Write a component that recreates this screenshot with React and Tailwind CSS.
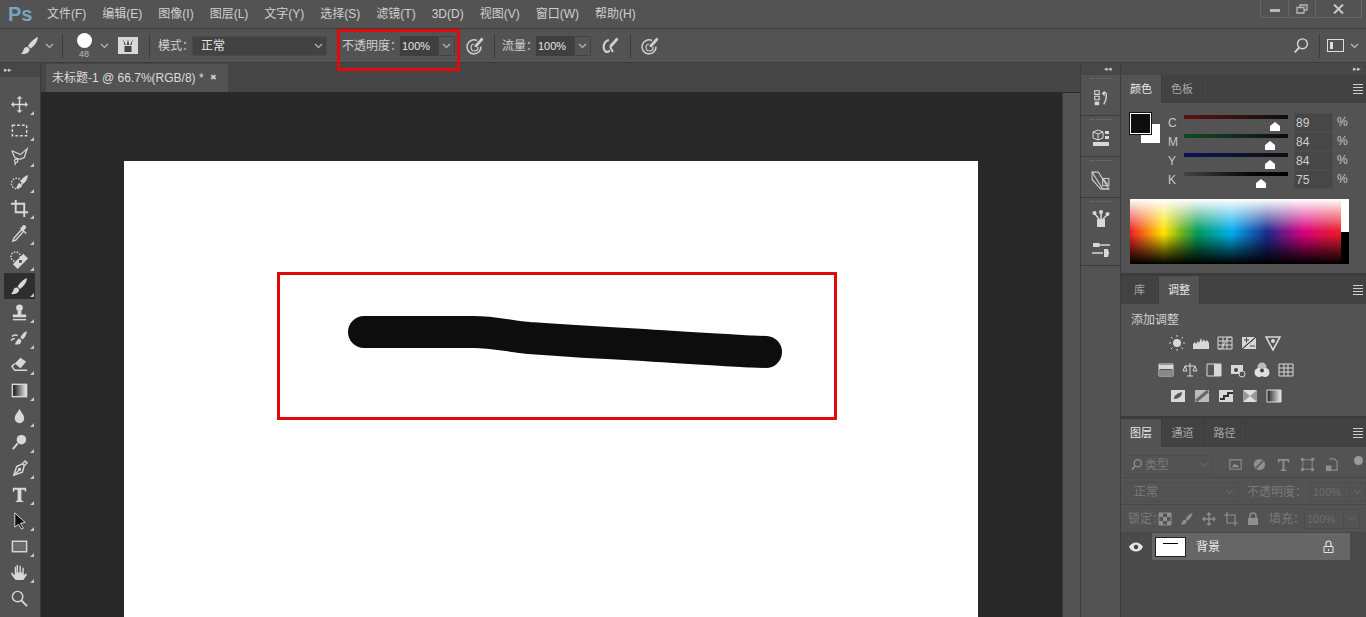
import React from 'react';

const FONT = "font-['Liberation_Sans','Noto_Sans_CJK_SC',sans-serif]";

const Ico = ({ size = 20, box = 20, className = 'text-[#d8d8d8]', children }) => (
  <svg width={size} height={size} viewBox={`0 0 ${box} ${box}`} fill="none" stroke="currentColor" strokeWidth="1.5" className={`shrink-0 ${className}`}>
    {children}
  </svg>
);

const Chevron = ({ className = 'text-[#bdbdbd]' }) => (
  <svg width="9" height="6" viewBox="0 0 9 6" fill="none" stroke="currentColor" strokeWidth="1.1" className={`shrink-0 ${className}`}>
    <path d="M1 1l3.5 3.5L8 1" />
  </svg>
);

const Brush = () => (
  <>
    <path d="M18 1c-3 1-8 5-10 9l2.500 2.500c4-2.500 7-7 7.500-11.500z" fill="currentColor" stroke="none" />
    <path d="M7 11c-2 0-3 1-3.500 3-.3 1.500-1.500 3-2.500 4 3 .5 8-.5 8.500-4 .2-1.500-1-3-2.500-3z" fill="currentColor" stroke="none" />
  </>
);

const toolIcons = [
  <><path d="M10 2v16M2 10h16" /><path d="M10 1l-3 3h6zM10 19l-3-3h6zM1 10l3-3v6zM19 10l-3-3v6z" fill="currentColor" stroke="none" /></>,
  <rect x="2.500" y="4.500" width="15" height="11" strokeDasharray="3 2" />,
  <><path d="M2 4l9 4 7-6-3 9-5 2" strokeWidth="1.300" /><path d="M10 13l-5-2-3-7" strokeWidth="1.300" /><circle cx="6.500" cy="14.500" r="1.800" strokeWidth="1.200" /><path d="M6 16l-1 3" strokeWidth="1.300" /></>,
  <><circle cx="7" cy="11" r="5.500" strokeDasharray="1.500 1.500" /><path d="M19 2c-3 1-7 4-8 7l2.500 2.500c3-2 5-5 5.500-9.500z" fill="currentColor" stroke="none" /><path d="M10 10.500c-2 .5-2 4-4 5.500 3 .5 6-.5 6.500-3z" fill="currentColor" stroke="none" /></>,
  <path d="M6 1v13h13M1 5h14v14" strokeWidth="2" />,
  <><path d="M12 5l-8 9-1 3 3-1 8-9" /><path d="M11 3l6 6M13 6l3-3a1.500 1.500 0 0 0-2-2l-2 3z" fill="currentColor" /></>,
  <><circle cx="6" cy="6" r="5" strokeDasharray="1.500 1.500" /><path d="M14 3l5 5L8 19l-5-5z" fill="currentColor" stroke="none" /><path d="M9.500 9.500h3v3h-3z" fill="#535353" stroke="none" /></>,
  <Brush />,
  <><circle cx="10" cy="5" r="3.500" fill="currentColor" stroke="none" /><path d="M8 8h4v4H8zM3 12h14v3H3z" fill="currentColor" stroke="none" /><path d="M3 17.500h14" /></>,
  <><path d="M18 2c-3 1-6 4-7 7l2 2c3-2 4-5 5-9z" fill="currentColor" stroke="none" /><path d="M10 10c-2 0-3 3-5 6 3 1 7 0 7-4z" fill="currentColor" stroke="none" /><path d="M2 8c2-2 4-2 6-1M1 12c1-1 2-2 4-2" /></>,
  <><path d="M11 3l6 4-6 7-6-5z" fill="currentColor" stroke="none" /><path d="M5 9l-3 3 3 4h13" /></>,
  <><defs><linearGradient id="tg"><stop offset="0" stopColor="#111" /><stop offset="1" stopColor="#eee" /></linearGradient></defs><rect x="2.500" y="3.500" width="15" height="13" fill="url(#tg)" /></>,
  <path d="M10 2c2 4 5 6 5 10a5 5 0 0 1-10 0c0-4 3-6 5-10z" fill="currentColor" stroke="none" />,
  <><circle cx="12" cy="7" r="5" fill="currentColor" stroke="none" /><path d="M8 11l-5 6" strokeWidth="2" /></>,
  <><path d="M16 2l2 2-3 3-2-2zM13 5l2 2-2 7-9 3 3-9z" /><path d="M4 17l5-5" /><circle cx="10" cy="11" r="1" fill="currentColor" /></>,
  <path d="M3 3h14v4h-1l-1-2h-3v11l2 1v1H6v-1l2-1V5H5L4 7H3z" fill="currentColor" stroke="none" />,
  <path d="M5 2l11 10-5 1 3 5-2 1-3-5-4 3z" fill="#111" stroke="#ddd" strokeWidth="1" />,
  <rect x="2.500" y="4.500" width="15" height="11" fill="#6b6b6b" />,
  <path d="M6 18c-2-2-4-5-5-7l1-1 3 3V4h1.500v6H7V2h1.500v8H10V3h1.500v7H13V5h1.500v8l2-2 1.500 1-4 6z" fill="currentColor" stroke="none" />,
  <><circle cx="8" cy="8" r="5.500" /><path d="M12 12l6 6" strokeWidth="2" /></>,
];

const menus = ['文件(F)', '编辑(E)', '图像(I)', '图层(L)', '文字(Y)', '选择(S)', '滤镜(T)', '3D(D)', '视图(V)', '窗口(W)', '帮助(H)'];

const Divider = ({ className = '' }) => <div className={`w-px h-[24px] bg-[#3c3c3c] shrink-0 ${className}`} />;

const Airbrush = ({ ring }) => (
  <Ico size={20} className="text-[#cfcfcf]">
    {ring ? <path d="M12 4.500a7 7 0 1 0 4 6" /> : <path d="M9 4a7 7 0 0 0-3 12c2 0 3-1 4-1" strokeWidth="2.200" />}
    {ring && <path d="M9 8a3.500 3.500 0 1 0 4 3" strokeWidth="1.200" />}
    <path d="M16.500 1.500l2 2-7 8-2.500-1.500z" fill="currentColor" stroke="none" />
    {!ring && <path d="M10 11l3 5" strokeWidth="2" />}
  </Ico>
);

const ValueBox = ({ value }) => (
  <div className="flex h-[20px] items-stretch shrink-0">
    <div className="w-[38px] bg-[#3f3f3f] text-[#e6e6e6] text-[11px] leading-[20px] pl-[2px]">{value}</div>
    <div className="w-[17px] border border-[#444] flex items-center justify-center"><Chevron /></div>
  </div>
);

const Label = ({ className, children }) => <span className={`whitespace-nowrap shrink-0 ${className}`}>{children}</span>;

const OptionsBar = () => (
  <div className="h-[35px] border-t border-b border-[#3c3c3c] bg-[#535353] flex items-center text-[12px] text-[#d0d0d0] relative shrink-0">
    <div className="flex items-center ml-[20px] w-[42px] gap-[5px] shrink-0">
      <Ico size={20}><Brush /></Ico>
      <Chevron />
    </div>
    <Divider />
    <div className="flex flex-col items-center ml-[11px] w-[20px] shrink-0">
      <div className="w-[15px] h-[15px] rounded-full bg-white" />
      <span className="text-[9px] leading-[9px] mt-[2px] text-[#bbb]">48</span>
    </div>
    <Chevron className="text-[#bdbdbd] ml-[6px]" />
    <div className="ml-[9px] w-[20px] h-[17px] shrink-0 bg-[#d8d8d8] flex items-center justify-center">
      <svg width="14" height="13" viewBox="0 0 14 13" fill="#444"><path d="M2 0l3 6H3.500zM7 0l1.200 6H5.800zM12 0l-1.500 6H9zM3.500 7h7v6h-7z" /></svg>
    </div>
    <Divider className="ml-[11px]" />
    <Label className="ml-[8px] w-[34px]">模式：</Label>
    <div className="w-[135px] h-[20px] shrink-0 bg-[#424242] border border-[#4a4a4a] flex items-center justify-between pl-[8px] pr-[3px] text-[#e6e6e6]">
      <span>正常</span>
      <Chevron />
    </div>
    <Label className="ml-[15px] w-[58px]">不透明度：</Label>
    <ValueBox value="100%" />
    <div className="ml-[10px]"><Airbrush ring /></div>
    <Divider className="ml-[9px]" />
    <Label className="ml-[7px] w-[34px]">流量：</Label>
    <ValueBox value="100%" />
    <div className="ml-[9px]"><Airbrush /></div>
    <Divider className="ml-[10px]" />
    <div className="ml-[9px]"><Airbrush ring /></div>
    <div className="flex-1" />
    <Ico size={18}><circle cx="10.500" cy="7.500" r="5.500" /><path d="M6.500 12L2 17" strokeWidth="2" /></Ico>
    <Divider className="ml-[8px]" />
    <div className="ml-[7px] w-[17px] h-[13px] border border-[#ddd] flex items-center pl-[2px]">
      <div className="w-[3px] h-[7px] bg-[#ddd]" />
    </div>
    <Chevron className="text-[#bdbdbd] ml-[6px] mr-[7px]" />
  </div>
);

const Toolbar = () => (
  <div className="w-[41px] shrink-0 border-r border-[#3a3a3a] bg-[#535353] flex flex-col">
    <div className="h-[14px] bg-[#474747] text-[#ccc] text-[7px] leading-[13px] pl-[4px]">▸▸</div>
    <div className="h-[14px]" />
    {toolIcons.map((icon, i) => (
      <div key={i} className={`h-[26px] w-[31px] ml-[4px] relative flex items-center justify-center ${i === 7 ? 'bg-[#2e2e2e] rounded-[1px]' : ''}`}>
        <Ico size={19}>{icon}</Ico>
        {i !== 19 && <div className="absolute right-[1px] bottom-[2px] w-0 h-0 border-l-[4px] border-l-transparent border-b-[4px] border-b-[#c8c8c8]" />}
      </div>
    ))}
  </div>
);

const Document = () => (
  <div className="flex-1 min-w-0 flex flex-col">
    <div className="h-[29px] bg-[#454545] shrink-0 flex items-end pl-[5px]">
      <div className="w-[182px] h-[28px] bg-[#535353] flex items-center pl-[6px] text-[12px] text-[#dcdcdc]">
        <span>未标题-1 @ 66.7%(RGB/8) *</span>
        <span className="ml-[6px] text-[8px] leading-none text-[#cfcfcf]">✖</span>
      </div>
    </div>
    <div className="flex-1 min-h-0 flex border-t border-[#2a2a2a]">
      <div className="flex-1 bg-[#282828] overflow-hidden pl-[83px] pt-[68px]">
        <div className="w-[854px] h-[456px] bg-white">
          <svg width="854" height="456" viewBox="0 0 854 456" fill="none">
            <path d="M240 171H350C368 171 385 175 405 177C445 180 480 182 520 184C560 187 600 189 628 190.500L642 191" stroke="#0d0d0d" strokeWidth="32" strokeLinecap="round" strokeLinejoin="round" />
          </svg>
        </div>
      </div>
      <div className="w-[18px] bg-[#535353] border-l border-[#3c3c3c]" />
    </div>
  </div>
);

const Grip = () => <div className="h-[3px] mx-[9px] mt-[3px] border-t border-dotted border-[#777]" />;

const DockGroup = ({ h, children }) => (
  <div className={`${h} border-b border-[#3c3c3c] flex flex-col`}>
    <Grip />
    <div className="flex-1 flex flex-col items-center justify-around">{children}</div>
  </div>
);

const Dock = () => (
  <div className="w-[41px] shrink-0 bg-[#535353] border-x border-[#3c3c3c] flex flex-col">
    <div className="h-[12px] bg-[#474747] text-[#ccc] text-[7px] leading-[11px] text-right pr-[8px]">◂◂</div>
    <DockGroup h="h-[41px]">
      <Ico size={18}><path d="M3 2h5v4H3zM3 8h5v4H3z" strokeWidth="1.200" /><path d="M3 14h5v4H3z" fill="currentColor" stroke="none" /><path d="M12 4h3c2 2 1 8-2 13" /><path d="M11 5l3-3v6z" fill="currentColor" stroke="none" /></Ico>
    </DockGroup>
    <DockGroup h="h-[41px]">
      <Ico size={20}><path d="M7 1l5 2v6l-5 2-5-2V3zM2 3l5 2 5-2M7 5v6" strokeWidth="1" /><path d="M14 2h4v3h-4zM14 7h4v3h-4zM2 13h16v4H2z" fill="currentColor" stroke="none" /></Ico>
    </DockGroup>
    <DockGroup h="h-[41px]">
      <Ico size={21} className="text-[#d0d0d0]"><path d="M2 2h6l10 16h-6z" strokeWidth="1" /><path d="M2 2v7l8 9h8" strokeWidth="1" /><path d="M12 8h6v7h-6z" strokeWidth="1" /><path d="M13 9l4 5" strokeWidth="1" /></Ico>
    </DockGroup>
    <DockGroup h="h-[68px]">
      <Ico size={20}><path d="M6 10h8v8H6z" fill="currentColor" stroke="none" /><path d="M8 10L4 5M10 10V4M12 10l4-4" strokeWidth="1.500" /><circle cx="3.500" cy="4" r="2" fill="currentColor" stroke="none" /><circle cx="10" cy="3" r="2" fill="currentColor" stroke="none" /><circle cx="16.500" cy="5" r="2" fill="currentColor" stroke="none" /></Ico>
      <Ico size={20}><path d="M10 5h9M1 13h11" /><path d="M2 3h6l2 2-2 2H2zM13 9h4l1 4-1 4h-4z" fill="currentColor" stroke="none" /></Ico>
    </DockGroup>
  </div>
);

const PanelTabs = ({ tabs, active, widths }) => (
  <div className="h-[28px] bg-[#424242] flex items-stretch relative shrink-0">
    {tabs.map((t, i) => (
      <div key={t} className={`${widths[i]} flex items-center justify-center text-[11px] border-r border-[#3c3c3c] ${i === active ? 'bg-[#535353] text-[#e8e8e8]' : 'text-[#a8a8a8]'}`}>{t}</div>
    ))}
    <div className="absolute right-[3px] top-[9px] w-[10px] flex flex-col gap-[2px]">
      <div className="h-px bg-[#cfcfcf]" /><div className="h-px bg-[#cfcfcf]" /><div className="h-px bg-[#cfcfcf]" /><div className="h-px bg-[#cfcfcf]" />
    </div>
  </div>
);

const sliders = [
  { k: 'C', v: '89', thumb: 'ml-[85px]', grad: 'bg-gradient-to-r from-[#5c0f0f] to-[#0d0d0d]' },
  { k: 'M', v: '84', thumb: 'ml-[80px]', grad: 'bg-gradient-to-r from-[#0b4a2c] to-[#0d0d0d]' },
  { k: 'Y', v: '84', thumb: 'ml-[80px]', grad: 'bg-gradient-to-r from-[#10105c] to-[#0d0d0d]' },
  { k: 'K', v: '75', thumb: 'ml-[71px]', grad: 'bg-gradient-to-r from-[#3e4644] to-[#000000]' },
];

const ColorPanel = () => (
  <div className="h-[199px] shrink-0 flex flex-col">
    <PanelTabs tabs={['颜色', '色板']} active={0} widths={['w-[41px]', 'w-[41px]']} />
    <div className="flex-1 bg-[#535353] border-b border-[#3c3c3c] pl-[9px] pt-[10px]">
      <div className="flex h-[76px]">
        <div className="w-[30px] h-[30px] relative shrink-0">
          <div className="absolute left-[11px] top-[11px] w-[19px] h-[19px] bg-white" />
          <div className="absolute left-0 top-0 w-[21px] h-[21px] bg-[#0d0d0d] border border-white outline outline-[#111]" />
        </div>
        <div className="ml-[8px] flex flex-col">
          {sliders.map((s) => (
            <div key={s.k} className="h-[19px] flex items-start text-[12px] text-[#c8c8c8]">
              <span className="w-[16px] leading-[19px] pt-[1px]">{s.k}</span>
              <div className="w-[104px] relative pt-[2px]">
                <div className={`h-[4px] ${s.grad}`} />
                <svg width="12" height="9" viewBox="0 0 12 9" className={`${s.thumb} mt-[3px]`}>
                  <path d="M6 0l5 4v5H1V4z" fill="#fff" />
                </svg>
              </div>
              <div className="ml-[6px] w-[39px] h-[19px] bg-[#474747] border border-[#4c4c4c] text-[#d0d0d0] leading-[18px] pl-[1px]">{s.v}</div>
              <span className="ml-[3px] pl-[1px] leading-[19px] text-[#c8c8c8]">%</span>
            </div>
          ))}
        </div>
      </div>
      <div className="mt-[10px] w-[219px] h-[65px] flex">
        <div className="flex-1 bg-[linear-gradient(to_bottom,#ffffff_0%,rgba(255,255,255,0.55)_22%,rgba(255,255,255,0)_50%,rgba(0,0,0,0)_54%,rgba(0,0,0,0.55)_78%,#000000_100%),linear-gradient(to_right,#ed1c24_0%,#ffe600_16%,#7ab51d_24%,#009a5a_32%,#00aeef_48%,#1a2a8c_65%,#d6007f_82%,#ed1c24_100%)]" />
        <div className="w-[8px] flex flex-col">
          <div className="flex-1 bg-white" />
          <div className="flex-1 bg-black" />
        </div>
      </div>
    </div>
  </div>
);

const adj = (d, filled) => <Ico size={16} box={16} className="text-[#d8d8d8]">{filled ? <path d={d} fill="currentColor" stroke="none" /> : <path d={d} strokeWidth="1" />}</Ico>;

const adjRows = [
  { pl: 'pl-[48px]', items: [
    <Ico size={16} box={16}><circle cx="8" cy="8" r="4" fill="currentColor" stroke="none" /><path d="M8 0v2M8 14v2M0 8h2M14 8h2M2 2l1.500 1.500M12.500 12.500L14 14M14 2l-1.500 1.500M2 14l1.500-1.500" strokeWidth="1" /></Ico>,
    adj('M0 14V9l2-2 1 2 2-3 1 2 2-5 1 4 2-3 1 3 2-2 2 3v6z', true),
    adj('M1 2h14v12H1zM6 2v12M10 2v12M1 6h14M1 10h14M2 14c5 0 6-12 12-12'),
    <Ico size={16} box={16}><path d="M1 2h14v12H1z" fill="currentColor" stroke="none" /><path d="M15 2L1 14z" fill="#333" stroke="#333" strokeWidth="1" /><path d="M3 5h5M5.500 2.500v5M9 11h5" stroke="#444" strokeWidth="1" /></Ico>,
    <Ico size={16} box={16}><path d="M1 2h14L8 15z" strokeWidth="1.600" /><circle cx="8" cy="6" r="2" fill="currentColor" stroke="none" /></Ico>,
  ] },
  { pl: 'pl-[37px]', items: [
    <Ico size={16} box={16}><path d="M1 2h14v12H1z" strokeWidth="1" /><path d="M1 3h14v4H1z" fill="currentColor" stroke="none" /><path d="M1 8h14v6H1z" fill="#888" stroke="none" /></Ico>,
    adj('M8 1v13M3 4h10M3 4L1 9h4zM13 4l-2 5h4zM5 14h6'),
    <Ico size={16} box={16}><path d="M1 2h14v12H1z" strokeWidth="1" /><path d="M8 2h7v12H8z" fill="currentColor" stroke="none" /></Ico>,
    <Ico size={16} box={16}><path d="M1 3h12v9H1z" fill="currentColor" stroke="none" /><circle cx="6" cy="8" r="2" fill="#444" stroke="none" /><circle cx="12" cy="12" r="3" fill="#535353" strokeWidth="1" /></Ico>,
    <Ico size={16} box={16}><circle cx="8" cy="5" r="4.500" fill="#bbb" stroke="none" /><circle cx="5" cy="10.500" r="4.500" fill="#e0e0e0" stroke="none" /><circle cx="11" cy="10.500" r="4.500" fill="#e0e0e0" stroke="none" /><circle cx="8" cy="8.500" r="2" fill="#444" stroke="none" /></Ico>,
    adj('M1 2h14v12H1zM1 6h14M1 10h14M6 2v12M10 2v12'),
  ] },
  { pl: 'pl-[49px]', items: [
    <Ico size={16} box={16}><path d="M1 2h14v12H1z" fill="currentColor" stroke="none" /><path d="M4 11c0-4 4-6 8-7 0 4-3 7-8 7z" fill="#555" stroke="none" /></Ico>,
    <Ico size={16} box={16}><path d="M1 2h14v12H1z" fill="#bbb" stroke="none" /><path d="M2 13L14 3" stroke="#666" strokeWidth="3" /></Ico>,
    <Ico size={16} box={16}><path d="M1 2h14v12H1z" fill="currentColor" stroke="none" /><path d="M2 11h4V8h4V5h5" stroke="#333" strokeWidth="2" /></Ico>,
    <Ico size={16} box={16}><path d="M1 2h14v12H1z" fill="#999" stroke="none" /><path d="M1 2h14L8 8zM1 14h14L8 8z" fill="#e0e0e0" stroke="none" /></Ico>,
    <Ico size={16} box={16}><defs><linearGradient id="ag"><stop offset="0" stopColor="#222" /><stop offset="1" stopColor="#eee" /></linearGradient></defs><path d="M1 2h14v12H1z" fill="url(#ag)" stroke="#ddd" strokeWidth="1" /></Ico>,
  ] },
];

const AdjustPanel = () => (
  <div className="h-[141px] shrink-0 flex flex-col mt-[2px]">
    <PanelTabs tabs={['库', '调整']} active={1} widths={['w-[38px]', 'w-[41px]']} />
    <div className="flex-1 bg-[#535353] border-b border-[#3c3c3c]">
      <div className="text-[12px] text-[#d0d0d0] pl-[10px] pt-[7px] h-[26px]">添加调整</div>
      {adjRows.map((row, r) => (
        <div key={r} className={`${row.pl} flex gap-[8px] h-[26.500px] items-center`}>
          {row.items.map((it, i) => <React.Fragment key={i}>{it}</React.Fragment>)}
        </div>
      ))}
    </div>
  </div>
);

const DimBox = ({ value }) => (
  <div className="flex h-[20px] ml-[5px] border border-[#4c4c4c] shrink-0">
    <div className="w-[38px] text-[11px] leading-[18px] pl-[2px] text-[#6e6e6e]">{value}</div>
    <div className="w-[16px] border-l border-[#4c4c4c] flex items-center justify-center"><Chevron className="text-[#666]" /></div>
  </div>
);

const dimIcon = 'text-[#8f8f8f]';

const LayersPanel = () => (
  <div className="flex-1 min-h-0 flex flex-col mt-[2px]">
    <PanelTabs tabs={['图层', '通道', '路径']} active={0} widths={['w-[41px]', 'w-[42px]', 'w-[42px]']} />
    <div className="flex-1 bg-[#4a4a4a] text-[12px]">
      <div className="h-[31px] pt-[5px] bg-[#535353] border-b border-[#484848] flex items-center pl-[4px] pr-[3px]">
        <div className="w-[87px] h-[20px] border border-[#4c4c4c] flex items-center pl-[4px] text-[#7a7a7a]">
          <Ico size={13} className={dimIcon}><circle cx="12" cy="8" r="5.500" strokeWidth="2" /><path d="M8 12l-5 6" strokeWidth="2.500" /></Ico>
          <span className="ml-[2px] flex-1">类型</span>
          <Chevron className="text-[#666] mr-[2px]" />
        </div>
        <div className="flex items-center gap-[9px] ml-[16px]">
          <Ico size={15} box={16} className={dimIcon}><path d="M2 3h12v10H2z" strokeWidth="1.200" /><path d="M4 11l3-4 2 2 1-1 2 3z" fill="currentColor" stroke="none" /></Ico>
          <Ico size={15} box={16} className={dimIcon}><circle cx="8" cy="8" r="6" fill="currentColor" stroke="none" /><path d="M4 12L12 4" stroke="#535353" /></Ico>
          <Ico size={15} box={16} className={dimIcon}><path d="M2 2h12v4h-1l-1-2H9v9l2 1v1H5v-1l2-1V4H4L3 6H2z" fill="currentColor" stroke="none" /></Ico>
          <Ico size={15} box={16} className={dimIcon}><path d="M3 3h10v10H3z" strokeWidth="1" /><path d="M1 1h3v3H1zM12 1h3v3h-3zM1 12h3v3H1zM12 12h3v3h-3z" fill="currentColor" stroke="none" /></Ico>
          <Ico size={15} box={16} className={dimIcon}><path d="M6 2h5l3 3v9H8" strokeWidth="1.200" /><path d="M2 9h6v6H2z" fill="currentColor" stroke="none" /></Ico>
        </div>
        <div className="ml-auto w-[9px] h-[22px] relative">
          <div className="absolute left-0 top-[2px] w-[9px] h-[9px] rounded-full bg-[#9a9a9a]" />
        </div>
      </div>
      <div className="h-[27px] pt-[2px] bg-[#535353] border-b border-[#484848] flex items-center pl-[4px] text-[#7a7a7a]">
        <div className="w-[117px] h-[20px] border border-[#4c4c4c] flex items-center justify-between pl-[8px] pr-[4px]">
          <span>正常</span>
          <Chevron className="text-[#666]" />
        </div>
        <span className="ml-[8px] w-[58px] whitespace-nowrap">不透明度：</span>
        <DimBox value="100%" />
      </div>
      <div className="h-[28px] pt-[1px] bg-[#535353] border-b border-[#484848] flex items-center pl-[7px] text-[#7a7a7a]">
        <span className="w-[30px] whitespace-nowrap">锁定：</span>
        <div className="flex items-center gap-[8px]">
          <Ico size={14} box={14} className={dimIcon}><path d="M1 1h4v4H1zM9 1h4v4H9zM5 5h4v4H5zM1 9h4v4H1zM9 9h4v4H9z" fill="currentColor" stroke="none" /><path d="M1 1h12v12H1z" strokeWidth="1" /></Ico>
          <Ico size={14} className={dimIcon}><Brush /></Ico>
          <Ico size={14} className={dimIcon}><path d="M10 2v16M2 10h16" strokeWidth="2" /><path d="M10 0l-4 4h8zM10 20l-4-4h8zM0 10l4-4v8zM20 10l-4-4v8z" fill="currentColor" stroke="none" /></Ico>
          <Ico size={14} box={14} className={dimIcon}><path d="M3 0v11h11M0 3h11v11" strokeWidth="1.200" /></Ico>
          <Ico size={14} box={14} className={dimIcon}><path d="M2 6h10v7H2z" fill="currentColor" stroke="none" /><path d="M4 6V4a3 3 0 0 1 6 0v2" strokeWidth="1.500" /></Ico>
        </div>
        <span className="ml-[9px] w-[30px] whitespace-nowrap">填充：</span>
        <DimBox value="100%" />
      </div>
      <div className="h-[27px] flex">
        <div className="w-[31px] flex items-center justify-center border-r border-[#484848]">
          <svg width="14" height="10" viewBox="0 0 14 10"><path d="M0 5c3-6 11-6 14 0-3 6-11 6-14 0z" fill="#e4e4e4" /><circle cx="7" cy="5" r="2.200" fill="#444" /></svg>
        </div>
        <div className="w-[198px] bg-[#666666] flex items-center pl-[3px] text-[#ececec]">
          <div className="w-[31px] h-[20px] bg-white border border-[#222] flex items-start pt-[5px] pl-[7px]">
            <div className="w-[15px] h-[1.500px] bg-black" />
          </div>
          <span className="ml-[10px]">背景</span>
          <svg width="11" height="13" viewBox="0 0 11 13" fill="none" className="ml-auto mr-[16px]">
            <path d="M3 6V3.500a2.500 2.500 0 0 1 5 0V6" stroke="#e4e4e4" strokeWidth="1.200" />
            <path d="M1 6.500h9v6H1z" stroke="#e4e4e4" />
            <path d="M5 9h1v2H5z" fill="#e4e4e4" />
          </svg>
        </div>
      </div>
    </div>
  </div>
);

const Panels = () => (
  <div className="w-[245px] shrink-0 bg-[#3c3c3c] flex flex-col">
    <div className="h-[12px] bg-[#474747] text-[#ccc] text-[7px] leading-[11px] text-right pr-[5px] shrink-0">▸▸</div>
    <ColorPanel />
    <AdjustPanel />
    <LayersPanel />
  </div>
);

const App = () => {
  return (
    <div className={`w-[1366px] h-[617px] overflow-hidden bg-[#535353] relative flex flex-col ${FONT}`}>
      {/* Menu bar */}
      <div className="h-[28px] shrink-0 flex items-center relative">
        <span className="ml-[8px] w-[39px] text-[20px] leading-none font-bold text-[#7aa3c2]">Ps</span>
        <div className="flex gap-[16px] text-[12px] text-[#d0d0d0]">
          {menus.map((m) => <span key={m}>{m}</span>)}
        </div>
        <div className="absolute right-[4px] top-0 w-[102px] h-[18px] border-x border-b border-[#666] rounded-b-[3px] flex items-center">
          <div className="w-[28px] h-full border-r border-[#666] flex items-center justify-center">
            <div className="w-[10px] h-[3px] mt-[3px] bg-[#b8b8b8]" />
          </div>
          <div className="w-[27px] h-full border-r border-[#666] flex items-center justify-center">
            <svg width="12" height="10" viewBox="0 0 12 10" fill="none" stroke="#b8b8b8" strokeWidth="1.300"><path d="M4 3V1h7v5H8" /><path d="M1 3.500h7v5.500H1z" /></svg>
          </div>
          <div className="flex-1 flex items-center justify-center">
            <svg width="11" height="10" viewBox="0 0 11 10" stroke="#c8c8c8" strokeWidth="2"><path d="M1 0.500l9 9M10 0.500l-9 9" /></svg>
          </div>
        </div>
      </div>

      <OptionsBar />

      {/* Workspace */}
      <div className="flex-1 min-h-0 flex">
        <Toolbar />
        <Document />
        <Dock />
        <Panels />
      </div>

      {/* Annotation boxes */}
      <div className="absolute left-[337px] top-[29px] w-[123px] h-[42px] border-[3px] border-[#e00a0a]" />
      <div className="absolute left-[277px] top-[272px] w-[560px] h-[148px] border-[3px] border-[#e00a0a]" />
    </div>
  );
};

export default App;
